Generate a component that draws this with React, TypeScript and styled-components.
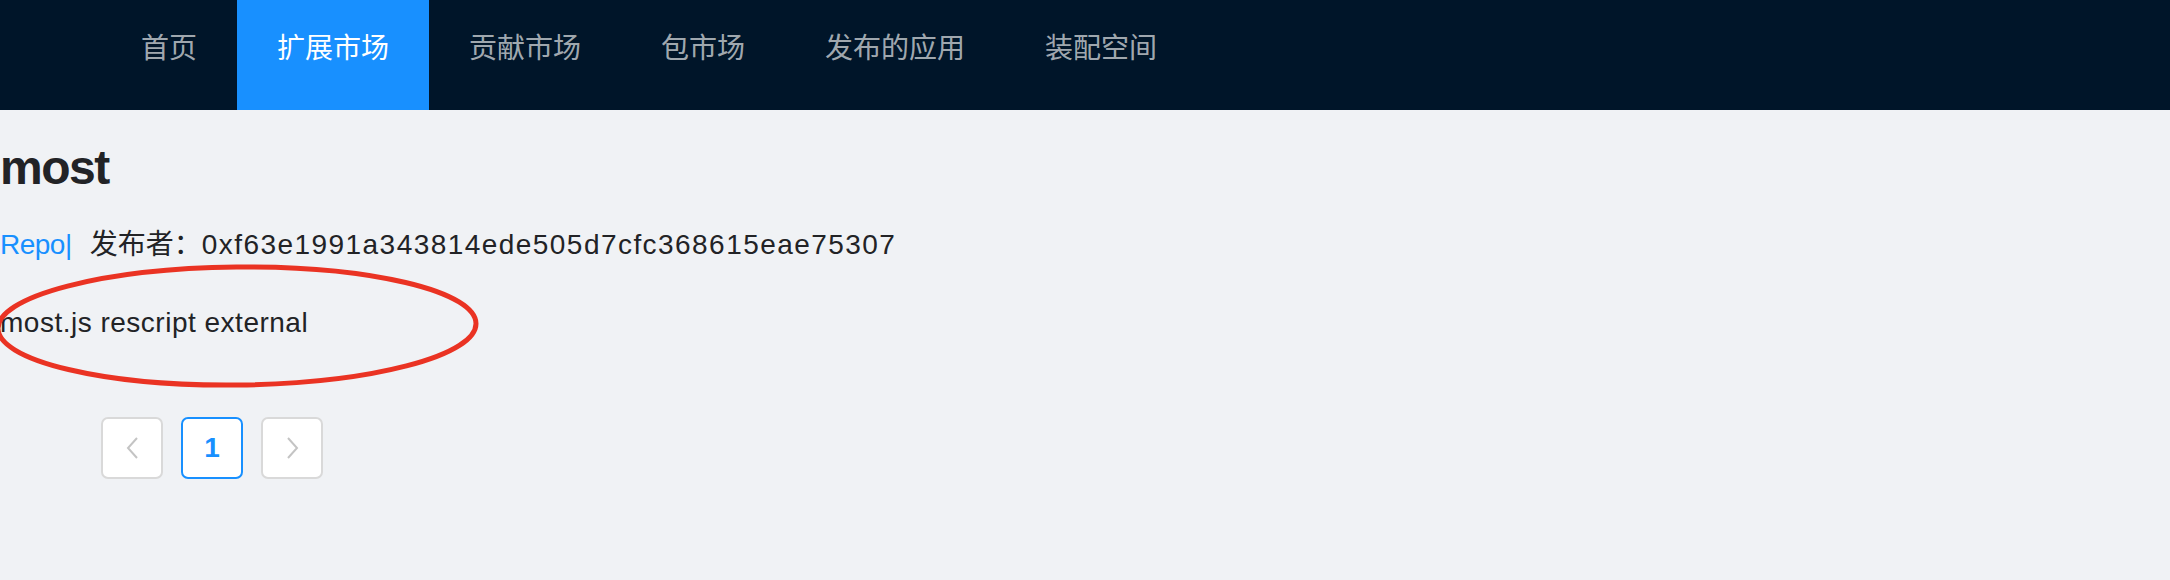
import React from "react";
import styled, { createGlobalStyle } from "styled-components";

const menuItems = ["首页", "扩展市场", "贡献市场", "包市场", "发布的应用", "装配空间"];
const publisher = "0xf63e1991a343814ede505d7cfc368615eae75307";

export default function App() {
  return (
    <>
      <GlobalStyle />
      <Page>
        <Header>
          <Menu>
            {menuItems.map((item) => (
              <MenuItem key={item} $active={item === "扩展市场"}>
                {item}
              </MenuItem>
            ))}
          </Menu>
        </Header>
        <Content>
          <Title>most</Title>
          <MetaRow>
            <RepoLink href="#">Repo|</RepoLink>
            <Publisher>发布者：</Publisher>
            <Hash>{publisher}</Hash>
          </MetaRow>
          <Description>most.js rescript external</Description>
          <Pagination>
            <PageButton $disabled>
              <svg width="13" height="22" viewBox="0 0 13 22">
                <path d="M11 1 L2 11 L11 21" fill="none" stroke="#c4c4c4" strokeWidth="2" />
              </svg>
            </PageButton>
            <PageButton $active>1</PageButton>
            <PageButton $disabled>
              <svg width="13" height="22" viewBox="0 0 13 22">
                <path d="M2 1 L11 11 L2 21" fill="none" stroke="#c4c4c4" strokeWidth="2" />
              </svg>
            </PageButton>
          </Pagination>
        </Content>
        <Annotation width="500" height="140" viewBox="0 0 500 140">
          <ellipse cx="237" cy="71" rx="239" ry="59" fill="none" stroke="#ea3323" strokeWidth="5" transform="rotate(-0.6 237 71)" />
        </Annotation>
      </Page>
    </>
  );
}

const GlobalStyle = createGlobalStyle`
  html, body {
    margin: 0;
    padding: 0;
    background: #f0f2f5;
    font-family: "Liberation Sans", "Noto Sans CJK SC", sans-serif;
    color: rgba(0, 0, 0, 0.85);
  }
`;

const Page = styled.div`
  position: relative;
  min-height: 580px;
  overflow: hidden;
`;

const Header = styled.div`
  height: 110px;
  background: #001529;
  padding-left: 101px;
  display: flex;
`;

const Menu = styled.div`
  display: flex;
  height: 100%;
`;

const MenuItem = styled.div<{ $active?: boolean }>`
  padding: 0 40px;
  height: 110px;
  line-height: 92px;
  font-size: 28px;
  font-family: "Noto Sans CJK SC", sans-serif;
  color: ${(p) => (p.$active ? "#ffffff" : "rgba(255, 255, 255, 0.65)")};
  background: ${(p) => (p.$active ? "#1890ff" : "transparent")};
`;

const Content = styled.div`
  display: flex;
  flex-direction: column;
  align-items: flex-start;
`;

const Title = styled.h1`
  margin: 29px 0 0;
  font-size: 48px;
  line-height: 58px;
  font-weight: 700;
  letter-spacing: -1.5px;
  color: #222326;
`;

const MetaRow = styled.div`
  margin-top: 24px;
  display: flex;
  align-items: baseline;
  font-size: 28px;
  line-height: 42px;
  color: #222326;
`;

const RepoLink = styled.a`
  color: #1890ff;
  text-decoration: none;
  margin-right: 18px;
  letter-spacing: -0.5px;
`;

const Publisher = styled.span`
  font-family: "Noto Sans CJK SC", sans-serif;
  font-size: 28px;
`;

const Hash = styled.span`
  letter-spacing: 1.45px;
`;

const Description = styled.div`
  margin-top: 36px;
  font-size: 28px;
  line-height: 42px;
  letter-spacing: 0.5px;
  color: #222326;
`;

const Pagination = styled.div`
  margin: 73px 0 0 101px;
  display: flex;
  gap: 18px;
`;

const PageButton = styled.div<{ $active?: boolean; $disabled?: boolean }>`
  box-sizing: border-box;
  width: 62px;
  height: 62px;
  display: flex;
  align-items: center;
  justify-content: center;
  background: #ffffff;
  border: 2px solid ${(p) => (p.$active ? "#1890ff" : "#d9d9d9")};
  border-radius: 7px;
  font-size: 28px;
  font-weight: 700;
  color: #1890ff;
`;

const Annotation = styled.svg`
  position: absolute;
  left: 0;
  top: 255px;
  overflow: visible;
  pointer-events: none;
`;
